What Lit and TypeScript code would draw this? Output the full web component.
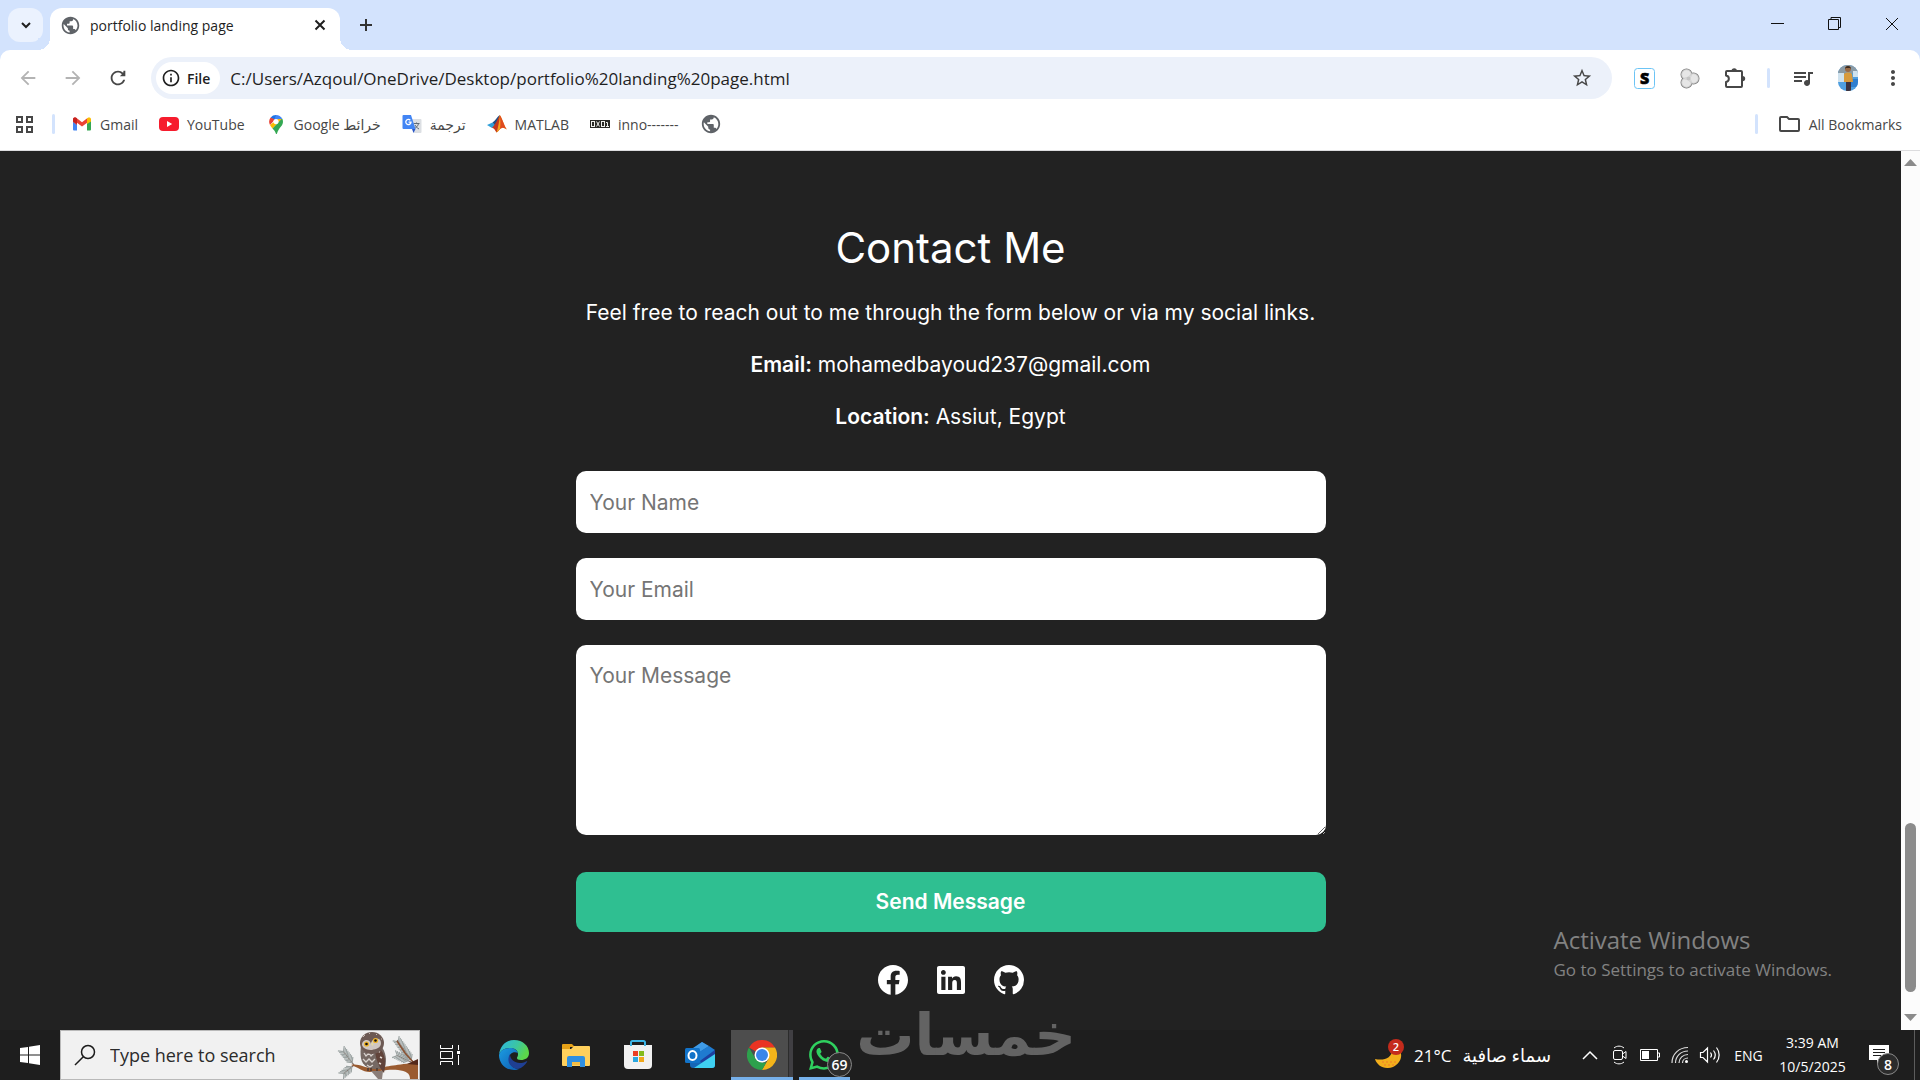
import { LitElement, html, css, svg, nothing } from "lit";
import { customElement, property } from "lit/decorators.js";

const PATHS: Record<string, string> = {
  globe:
    "M12 2C6.48 2 2 6.48 2 12s4.48 10 10 10 10-4.48 10-10S17.52 2 12 2zm-1 17.93c-3.95-.49-7-3.85-7-7.93 0-.62.08-1.21.21-1.79L9 15v1c0 1.1.9 2 2 2v1.93zm6.9-2.54c-.26-.81-1-1.39-1.9-1.39h-1v-3c0-.55-.45-1-1-1H8v-2h2c.55 0 1-.45 1-1V7h2c1.1 0 2-.9 2-2v-.41c2.93 1.19 5 4.06 5 7.41 0 2.08-.8 3.97-2.1 5.39z",
  back: "M20 11H7.83l5.59-5.59L12 4l-8 8 8 8 1.41-1.41L7.83 13H20v-2z",
  forward: "M12 4l-1.41 1.41L16.17 11H4v2h12.17l-5.58 5.59L12 20l8-8z",
  reload:
    "M17.65 6.35C16.2 4.9 14.21 4 12 4c-4.42 0-7.99 3.58-7.99 8s3.57 8 7.99 8c3.73 0 6.84-2.55 7.73-6h-2.08c-.82 2.33-3.04 4-5.65 4-3.31 0-6-2.69-6-6s2.69-6 6-6c1.66 0 3.14.69 4.22 1.78L14 10h6V4h-2z",
  star: "M22 9.24l-7.19-.62L12 2 9.19 8.63 2 9.24l5.46 4.73L5.82 21 12 17.27 18.18 21l-1.63-7.03L22 9.24zM12 15.4l-3.76 2.27 1-4.28-3.32-2.88 4.38-.38L12 6.1l1.71 4.04 4.38.38-3.32 2.88 1 4.28L12 15.4z",
  media:
    "M15 6H3v2h12V6zm0 4H3v2h12v-2zM3 16h8v-2H3v2zM17 6v8.18c-.31-.11-.65-.18-1-.18-1.66 0-3 1.34-3 3s1.34 3 3 3 3-1.34 3-3V8h3V6h-5z",
  more: "M12 8c1.1 0 2-.9 2-2s-.9-2-2-2-2 .9-2 2 .9 2 2 2zm0 2c-1.1 0-2 .9-2 2s.9 2 2 2 2-.9 2-2-.9-2-2-2zm0 6c-1.1 0-2 .9-2 2s.9 2 2 2 2-.9 2-2-.9-2-2-2z",
  info: "M11 7h2v2h-2zm0 4h2v6h-2zm1-9C6.48 2 2 6.48 2 12s4.48 10 10 10 10-4.48 10-10S17.52 2 12 2zm0 18c-4.41 0-8-3.59-8-8s3.59-8 8-8 8 3.59 8 8-3.59 8-8 8z",
};

const glyph = (name: string, size: number) =>
  html`<svg width=${size} height=${size} viewBox="0 0 24 24" fill="currentColor" aria-hidden="true"><path d=${PATHS[name]}></path></svg>`;

const draw = (w: number, h: number, body: unknown) =>
  html`<svg width=${w} height=${h} viewBox="0 0 ${w} ${h}" fill="none" aria-hidden="true">${body}</svg>`;

const gmail = draw(20, 20, svg`
  <path d="M1 5v10.500a1 1 0 0 0 1 1h3V8z" fill="#4285f4"/>
  <path d="M15 8v8.500h3a1 1 0 0 0 1-1V5z" fill="#34a853"/>
  <path d="M1 5.500C1 3.500 3 3 4.500 4L10 8.300 15.500 4v4.400L10 12.500 5 8.700V11L1 8z" fill="#ea4335"/>
  <path d="M1 5.500C1 3.500 3 3 4.500 4L5 4.400V10L1 7.500z" fill="#c5221f"/>
  <path d="M19 5.500C19 3.500 17 3 15.500 4L15 4.400V10l4-2.500z" fill="#fbbc04"/>`);

const youtube = draw(20, 20, svg`
  <rect x="0" y="3" width="20" height="14" rx="4" fill="#f61c2d"/>
  <path d="M8 7l5.200 3L8 13z" fill="#fff"/>`);

const maps = draw(20, 20, svg`
  <path d="M10 1a7 7 0 0 0-5.300 2.400L10 8z" fill="#1a73e8"/>
  <path d="M4.700 3.400A7 7 0 0 0 4 11l5-5.600z" fill="#ea4335"/>
  <path d="M10 1a7 7 0 0 1 6.200 4L11 10.500 8 7z" fill="#4285f4"/>
  <path d="M4 11c.6 1.200 1.500 2.300 2.500 3.500L16.200 5 12 5z" fill="#fbbc04"/>
  <path d="M16.200 4.600c1.500 3 .7 5.400-1.200 7.900-1.700 2.200-3.200 4-4 7-.3.800-.9.800-1.200 0-.6-2-1.700-3.500-3.300-5z" fill="#34a853"/>
  <circle cx="10" cy="7.600" r="2.600" fill="#fff"/>`);

const translate = draw(20, 20, svg`
  <path d="M8 5h10.500a1 1 0 0 1 1 1v12a1 1 0 0 1-1 1H12z" fill="#dcdfe3"/>
  <path d="M11.500 9.500h6M14.500 8.500v1M16.500 9.500c-.5 2.500-2 4-4 5M13 11c.8 1.500 2 2.800 4 4" stroke="#5f6b78" stroke-width="1"/>
  <path d="M1.500 1H9l4.500 14H1.500a1 1 0 0 1-1-1V2a1 1 0 0 1 1-1z" fill="#4285f4"/>
  <path d="M10 15h3.500L11.500 19z" fill="#2a56c6"/>
  <path d="M8.300 6.200A2.600 2.600 0 1 0 9 8.200H6.600" stroke="#fff" stroke-width="1.300"/>`);

const matlab = draw(20, 20, svg`
  <path d="M0 11l5.500-2.500L8 11.500 5 14z" fill="#2f9fd8"/>
  <path d="M5.500 8.500C8 7 10 3 12.800 1L9 13l-4 1 3-2.500z" fill="#1b4f86"/>
  <path d="M12.800 1C10.500 5 9 10 5 14c2-.6 3 2.500 4.500 4.500 2-1 3.500-4 5-4.500z" fill="#c3361d"/>
  <path d="M12.800 1c2 2.500 4 10 7 14.500-2.500-1.800-4-2-5.300-1.500C12 15 11 18 9.500 18.500 11 14 12.500 7 12.800 1z" fill="#f2a31b"/>
  <path d="M12.800 1c.5 4 1 9 .2 13.500l2-.6c2-.4 3 .5 4.800 1.600C16.800 11 15 3.500 12.800 1z" fill="#df4a1e"/>`);

const inno = draw(20, 20, svg`
  <rect x="0" y="6" width="20" height="8" fill="#2a2a26"/>
  <g stroke="#f2f2ee" stroke-width="1">
    <rect x="1.500" y="7.500" width="3" height="5"/><path d="M6.500 7.500l3 5M9.500 7.500l-3 5"/>
    <rect x="11.500" y="7.500" width="3" height="5"/><path d="M16 8.500h1.500v4.500M16 12.500h3"/>
  </g>`);

interface Bookmark {
  label: string;
  icon: unknown;
  dir?: string;
}

const BOOKMARKS: Bookmark[] = [
  { label: "Gmail", icon: gmail },
  { label: "YouTube", icon: youtube },
  { label: "Google خرائط", icon: maps },
  { label: "ترجمة", icon: translate, dir: "rtl" },
  { label: "MATLAB", icon: matlab },
  { label: "inno-------", icon: inno },
  { label: "", icon: glyph("globe", 22) },
];

const reset = css`
  *, *::before, *::after { box-sizing: border-box; }
  button, input, textarea { font: inherit; color: inherit; border: 0; margin: 0; }
  button { background: none; padding: 0; display: grid; place-items: center; }
  a { color: inherit; text-decoration: none; }
  svg { display: block; flex: none; }
`;

@customElement("browser-bar")
export class BrowserBar extends LitElement {
  @property() title = "";
  @property() address = "";

  static styles = [
    reset,
    css`
      :host { display: block; background: #fff; color: #1f1f1f; font-family: "Open Sans", "Noto Sans", "DejaVu Sans", sans-serif; border-bottom: 1px solid #dcdcde; }
      .strip { display: flex; align-items: flex-start; height: 50px; background: #d3e3fd; padding-left: 8px; }
      .tabs-menu { width: 35px; height: 34px; margin-top: 8px; border-radius: 12px; background: #ebf2fe; }
      .tab { position: relative; display: flex; align-items: center; width: 290px; height: 42px; margin: 8px 0 0 7px; padding: 0 10px 8px; gap: 9px; background: #fff; border-radius: 12px 12px 0 0; font-size: 14px; }
      .tab::before, .tab::after { content: ""; position: absolute; bottom: 0; width: 12px; height: 12px; }
      .tab::before { right: 100%; background: radial-gradient(circle at 0 0, #d3e3fd 12px, #fff 12px); }
      .tab::after { left: 100%; background: radial-gradient(circle at 100% 0, #d3e3fd 12px, #fff 12px); }
      .tab-icon { color: #5f6368; }
      .tab-title { flex: 1; }
      .new-tab { width: 52px; height: 50px; color: #333; }
      .controls { display: flex; margin-left: auto; }
      .control { width: 57px; height: 48px; color: #111; }
      .toolbar { display: flex; align-items: center; height: 56px; padding: 0 5px; background: #fff; color: #474747; }
      .corners { background: #d3e3fd; }
      .corners .toolbar { border-radius: 10px 10px 0 0; }
      .tool { width: 45px; height: 42px; }
      .off { color: #b3b3b3; }
      .address { display: flex; flex: 1; align-items: center; height: 42px; margin: 0 10px 0 11px; padding: 0 19px 0 5px; border-radius: 21px; background: #ecf1fa; color: #1f1f1f; }
      .chip { display: flex; align-items: center; gap: 6px; height: 32px; padding: 0 10px 0 5px; border-radius: 16px; background: #fff; font-size: 14px; font-weight: 600; }
      .url { flex: 1; min-width: 0; margin-left: 10px; padding: 0; background: none; font-size: 17px; outline: 0; }
      .favourite { color: #474747; }
      .rule { width: 3px; height: 20px; border-radius: 2px; background: #d3e3fd; }
      .toolbar .rule { margin: 0 10px; }
      .bookmarks { display: flex; align-items: center; height: 44px; padding: 0 18px 8px 14px; gap: 21px; font-size: 14px; color: #474747; }
      .bookmark { display: flex; align-items: center; gap: 8px; }
      .apps { margin-right: -3px; }
      .apps + .rule { margin-right: -4px; }
      .spacer { flex: 1; }
      .globe { color: #5f6368; }
    `,
  ];

  render() {
    return html`
      <header class="strip">
        <button class="tabs-menu" aria-label="Search tabs">
          ${draw(12, 12, svg`<path d="M2 4l4 4 4-4" stroke="#1f1f1f" stroke-width="2"/>`)}
        </button>
        <div class="tab">
          <span class="tab-icon">${glyph("globe", 21)}</span>
          <span class="tab-title">${this.title}</span>
          <button aria-label="Close tab">
            ${draw(20, 20, svg`<path d="M5.500 5.500l9 9M14.500 5.500l-9 9" stroke="#1f1f1f" stroke-width="2"/>`)}
          </button>
        </div>
        <button class="new-tab" aria-label="New tab">
          ${draw(14, 14, svg`<path d="M7 1v12M1 7h12" stroke="currentColor" stroke-width="2"/>`)}
        </button>
        <div class="controls">
          <button class="control" aria-label="Minimize">${draw(14, 14, svg`<path d="M0 6.500h13" stroke="currentColor"/>`)}</button>
          <button class="control" aria-label="Restore">
            ${draw(14, 14, svg`<path d="M.5 2.500h10v10H.5zM3 2.500V.5h9.500V10.500H11" stroke="currentColor"/>`)}
          </button>
          <button class="control" aria-label="Close">${draw(14, 14, svg`<path d="M1 1l12 12M13 1L1 13" stroke="currentColor"/>`)}</button>
        </div>
      </header>
      <div class="corners">
        <div class="toolbar">
          <button class="tool off" aria-label="Back">${glyph("back", 22)}</button>
          <button class="tool off" aria-label="Forward">${glyph("forward", 22)}</button>
          <button class="tool" aria-label="Reload">${glyph("reload", 22)}</button>
          <div class="address">
            <button class="chip">${glyph("info", 20)}<span>File</span></button>
            <input class="url" aria-label="Address" .value=${this.address} />
            <button class="favourite" aria-label="Bookmark this page">${glyph("star", 22)}</button>
          </div>
          <button class="tool" aria-label="S extension">
            ${draw(21, 21, svg`
              <rect x=".5" y=".5" width="20" height="20" rx="3" fill="#fff" stroke="#6cc4f5"/>
              <text x="10.500" y="16" text-anchor="middle" font-size="16" font-weight="800" fill="#000" stroke="#000" stroke-width=".6">S</text>`)}
          </button>
          <button class="tool" aria-label="Colour extension">
            ${draw(21, 21, svg`
              <g stroke="#7d7d7d" stroke-width="2"><circle cx="7.500" cy="6.500" r="5"/><circle cx="7.500" cy="14.500" r="5"/><circle cx="14.500" cy="10.500" r="5"/></g>
              <g fill="#e6e6e6"><circle cx="7.500" cy="6.500" r="5"/><circle cx="7.500" cy="14.500" r="5"/><circle cx="14.500" cy="10.500" r="5"/></g>
              <g stroke="#c6c6c6" stroke-width=".7"><circle cx="7.500" cy="6.500" r="4.800"/><circle cx="7.500" cy="14.500" r="4.800"/><circle cx="14.500" cy="10.500" r="4.800"/></g>
              <circle cx="9.500" cy="10.500" r="2" fill="#c4c4c4"/>`)}
          </button>
          <button class="tool" aria-label="Extensions">
            ${draw(22, 22, svg`
              <path d="M3 4h14a1 1 0 0 1 1 1v14a1 1 0 0 1-1 1H3a1 1 0 0 1-1-1v-4c3.800-.6 3.800-5.800 0-6.400V5a1 1 0 0 1 1-1z" stroke="currentColor" stroke-width="2" stroke-linejoin="round"/>
              <path d="M7.500 4a2.700 2.700 0 0 1 5.400 0zM18.600 9a2.600 2.600 0 0 1 0 5.200z" fill="currentColor"/>`)}
          </button>
          <span class="rule"></span>
          <button class="tool" aria-label="Media">${glyph("media", 24)}</button>
          <button class="tool" aria-label="Profile">
            ${draw(20, 26, svg`
              <clipPath id="face"><rect width="20" height="26" rx="9"/></clipPath>
              <g clip-path="url(#face)">
                <rect width="20" height="26" fill="#4f9fe0"/>
                <path d="M0 0h20v8H0z" fill="#8a9aa5"/><path d="M0 8h6v9H0zM15 6h5v6h-5z" fill="#cfe2ee"/>
                <path d="M13 14h7v8h-7z" fill="#2f7fd0"/>
                <path d="M6 9c1-2 7-2 8 0l1 8H6z" fill="#d79a3c"/><circle cx="10" cy="4" r="3" fill="#9a6a43"/>
                <path d="M7 4c0-4 6-4 6 0l-1-1H8z" fill="#3a2a20"/><path d="M8 17h5v9H8z" fill="#3c3440"/>
              </g>`)}
          </button>
          <button class="tool" aria-label="Menu">${glyph("more", 24)}</button>
        </div>
      </div>
      <nav class="bookmarks">
        <button class="apps" aria-label="Apps">
          ${draw(20, 20, svg`<path d="M3 3h5v5H3zM13 3h5v5h-5zM3 13h5v5H3zM13 13h5v5h-5z" stroke="currentColor" stroke-width="2"/>`)}
        </button>
        <span class="rule"></span>
        ${BOOKMARKS.map(
          (b) => html`<a class="bookmark" href="#">
            <span class="globe">${b.icon}</span>
            ${b.label ? html`<span dir=${b.dir ?? "ltr"}>${b.label}</span>` : nothing}
          </a>`
        )}
        <span class="spacer"></span>
        <span class="rule"></span>
        <a class="bookmark" href="#">
          ${draw(22, 18, svg`<path d="M1 3a1 1 0 0 1 1-1h6l2 2h9a1 1 0 0 1 1 1v10a1 1 0 0 1-1 1H2a1 1 0 0 1-1-1z" stroke="currentColor" stroke-width="2"/>`)}
          <span>All Bookmarks</span>
        </a>
      </nav>
    `;
  }
}

const SOCIAL = [
  {
    label: "Facebook",
    box: "8 8 496 496",
    width: 30,
    path: "M504 256C504 119 393 8 256 8S8 119 8 256c0 123.780 90.690 226.380 209.250 245V327.690h-63V256h63v-54.640c0-62.150 37-96.480 93.670-96.480 27.140 0 55.520 4.840 55.520 4.840v61h-31.280c-30.800 0-40.410 19.120-40.410 38.730V256h68.780l-11 71.690h-57.780V501C413.310 482.380 504 379.780 504 256z",
  },
  {
    label: "LinkedIn",
    box: "0 32 448 448",
    width: 28,
    path: "M416 32H31.900C14.300 32 0 46.500 0 64.300v383.400C0 465.500 14.300 480 31.900 480H416c17.600 0 32-14.500 32-32.300V64.300c0-17.800-14.400-32.300-32-32.300zM135.400 416H69V202.200h66.500V416zm-33.200-243c-21.300 0-38.500-17.300-38.500-38.500S80.900 96 102.200 96c21.200 0 38.500 17.300 38.500 38.500 0 21.300-17.200 38.500-38.500 38.500zm282.100 243h-66.400V312c0-24.800-.5-56.700-34.500-56.700-34.600 0-39.900 27-39.900 54.900V416h-66.400V202.200h63.700v29.200h.9c8.900-16.800 30.600-34.500 62.900-34.500 67.200 0 79.700 44.300 79.700 101.900V416z",
  },
  {
    label: "GitHub",
    box: "0 0 16 16",
    width: 30,
    path: "M8 0C3.580 0 0 3.580 0 8c0 3.540 2.290 6.530 5.470 7.590.4.070.55-.17.55-.38 0-.19-.01-.82-.01-1.490-2.010.370-2.530-.49-2.690-.94-.09-.23-.48-.94-.82-1.130-.28-.15-.68-.52-.01-.53.630-.01 1.080.580 1.230.820.720 1.210 1.870.870 2.330.660.070-.52.280-.87.510-1.070-1.780-.2-3.640-.89-3.640-3.950 0-.87.310-1.590.820-2.150-.08-.2-.36-1.020.080-2.120 0 0 .67-.21 2.200.820.640-.18 1.320-.27 2-.27s1.360.09 2 .27c1.530-1.040 2.200-.82 2.200-.82.440 1.100.160 1.920.080 2.120.510.560.820 1.270.820 2.150 0 3.070-1.870 3.750-3.650 3.950.290.250.540.730.540 1.480 0 1.070-.01 1.930-.01 2.200 0 .210.150.460.550.380A8.010 8.010 0 0 0 16 8c0-4.420-3.580-8-8-8z",
  },
];

@customElement("contact-page")
export class ContactPage extends LitElement {
  static styles = [
    reset,
    css`
      :host { display: flex; background: #222; color: #fff; font-family: Inter, "Open Sans", sans-serif; font-size: 21px; line-height: 32px; }
      .contact { flex: 1; display: flex; flex-direction: column; align-items: center; padding: 67px 20px 32px; }
      .heading { margin: 0 0 19px; font-size: 42px; line-height: 60px; font-weight: 400; }
      .lines { display: grid; gap: 20px; text-align: center; }
      .lines p { margin: 0; }
      .lines strong { font-weight: 600; }
      .form { display: grid; gap: 25px; width: 100%; max-width: 750px; margin-top: 38px; }
      .field { display: block; width: 100%; height: 62px; padding: 15px 14px; border-radius: 10px; background: #fff; color: #222; outline: 0; }
      .field::placeholder { color: #757575; }
      .message { height: 190px; resize: vertical; }
      .send { height: 60px; margin-top: 12px; border-radius: 10px; background: #2fbf91; color: #fff; font-weight: 600; }
      .social { display: flex; align-items: center; gap: 29px; margin-top: 33px; }
      .track { display: flex; flex-direction: column; align-items: center; width: 19px; padding: 8px 0; background: #fcfcfc; }
      .thumb { width: 11px; height: 169px; margin: auto 0 22px; border-radius: 6px; background: #8b8b8b; }
    `,
  ];

  render() {
    return html`
      <main class="contact">
        <h1 class="heading">Contact Me</h1>
        <div class="lines">
          <p>Feel free to reach out to me through the form below or via my social links.</p>
          <p><strong>Email:</strong> mohamedbayoud237@gmail.com</p>
          <p><strong>Location:</strong> Assiut, Egypt</p>
        </div>
        <form class="form" @submit=${(e: Event) => e.preventDefault()}>
          <input class="field" type="text" placeholder="Your Name" aria-label="Your Name" />
          <input class="field" type="email" placeholder="Your Email" aria-label="Your Email" />
          <textarea class="field message" placeholder="Your Message" aria-label="Your Message"></textarea>
          <button class="send" type="submit">Send Message</button>
        </form>
        <div class="social">
          ${SOCIAL.map(
            (s) => html`<a href="#" aria-label=${s.label}>
              <svg width=${s.width} height=${s.width} viewBox=${s.box} fill="#fff"><path d=${s.path}></path></svg>
            </a>`
          )}
        </div>
      </main>
      <div class="track">
        ${draw(13, 8, svg`<path d="M0 7l6.500-7L13 7z" fill="#8b8b8b"/>`)}
        <span class="thumb"></span>
        ${draw(13, 8, svg`<path d="M0 0l6.500 7L13 0z" fill="#8b8b8b"/>`)}
      </div>
    `;
  }
}

const sprig = (x: number, y: number, angle: number, length: number) => svg`
  <g transform="translate(${x} ${y}) rotate(${angle})" stroke="#9ba3a2" stroke-width="1.200">
    <path d="M0 0h${length}" stroke="#7d6a60"/>
    ${Array.from({ length: Math.floor(length / 2) - 1 }, (_, i) => svg`<path d="M${i * 2 + 3} 0l4-4M${i * 2 + 3} 0l4 4"/>`)}
  </g>`;

const owl = draw(82, 48, svg`
  ${sprig(17, 34, -128, 18)}
  ${sprig(17, 34, 140, 14)}
  ${sprig(76, 31, -126, 27)}
  ${sprig(74, 31, -155, 16)}
  <path d="M60 10l8 12 8 9" stroke="#8a5233" stroke-width="1.500"/>
  <path d="M14 34c8-2 14 4 24 3 14-1 20-4 43-5v16h-8c0-6-4-8-12-9-12-1-18 2-28 2-8 0-12-5-19-7z" fill="#9a5b30"/>
  <path d="M70 33l11-5v6z" fill="#54291a"/>
  <path d="M34 40h12l-1 8h-4z" fill="#8a7d78"/>
  <path d="M24 14c-1 10-1 18 6 22 6 3 14 3 18 0 2-7 1-15-4-21z" fill="#756863"/>
  <path d="M38 14c9 5 12 14 9 28-5-5-10-17-9-28z" fill="#61433a"/>
  <path d="M27 22l2 3 3-3 2 3 3-3M26 28l3 3 3-3 3 3 3-3M30 34l3 2 3-2" stroke="#d9d2ce" stroke-width="1.300"/>
  <path d="M41 20l2 1M43 26l2 1M42 32l2 1" stroke="#e8e0da" stroke-width="1.500"/>
  <ellipse cx="35" cy="12" rx="12" ry="11" fill="#6d5a54"/>
  <path d="M26 6l2-2M32 3l1-1M39 4l1-1M44 8l1 0" stroke="#c9bcb4"/>
  <path d="M25 14c0-6 8-7 9-1 1-7 10-7 10-1 0 5-5 6-9 7-4 0-9-1-10-5z" fill="#cfc7c2"/>
  <circle cx="29.500" cy="13" r="2.600" fill="#f0b429"/><circle cx="29.500" cy="13" r="1.300" fill="#111"/>
  <circle cx="38.500" cy="9.500" r="2.600" fill="#f0b429"/><circle cx="38.500" cy="9.500" r="1.300" fill="#111"/>
  <path d="M34 12l2-1 .5 3-1.500 1z" fill="#e6d9a0"/>
  <path d="M31 37v3M34 37v3M40 37v3" stroke="#4a3a33" stroke-width="1.500"/>`);

const edge = draw(30, 30, svg`
  <defs>
    <linearGradient id="e1" x1="0" y1="0" x2="1" y2="1"><stop offset="0" stop-color="#1b9de2"/><stop offset="1" stop-color="#0f5bb0"/></linearGradient>
    <linearGradient id="e2" x1="0" y1="0" x2="1" y2=".4"><stop offset="0" stop-color="#2ab5e6"/><stop offset=".6" stop-color="#3cc6a2"/><stop offset="1" stop-color="#5bd64a"/></linearGradient>
  </defs>
  <path d="M0 15C1 5 8 0 15 0c9 0 15 6 15 13 0 5-4 7-8 7-3 0-4-1-4-2 0-1 1-1 1-4 0-4-4-6-8-6C5 8 1 11 0 15z" fill="url(#e2)"/>
  <path d="M0 15c1-4 5-7 11-7 4 0 7 2 8 5-5-2-9 1-9 6 0 6 5 10 10 10-2 1-4 1-5 1C6 30 0 23 0 15z" fill="url(#e1)"/>
  <path d="M11 14c-4 7 0 14 8 15 4-1 7-4 9-7 .5-1 0-1-1-.6C20 25 11 22 11 14z" fill="#1f3f93"/>`);

const explorer = draw(28, 24, svg`
  <path d="M0 2a1 1 0 0 1 1-1h9l3 3h-5v4H0z" fill="#e6a117"/>
  <path d="M0 6h9l3-3h15a1 1 0 0 1 1 1v18a1 1 0 0 1-1 1H1a1 1 0 0 1-1-1z" fill="#ffd05c"/>
  <path d="M5 24V15a2 2 0 0 1 2-2h14a2 2 0 0 1 2 2v9h-5v-5h-8v5z" fill="#2f8fe0"/>
  <path d="M10 19h8v3h-8z" fill="#f3bd45"/>`);

const store = draw(30, 30, svg`
  <path d="M8 7V2.500A1.500 1.500 0 0 1 9.500 1h11A1.500 1.500 0 0 1 22 2.500V7" stroke="#3cb5e6" stroke-width="2"/>
  <path d="M1 5h28v20a4 4 0 0 1-4 4H5a4 4 0 0 1-4-4z" fill="#f1f1f1"/>
  <path d="M8 6V3M22 6V3" stroke="#3cb5e6" stroke-width="2"/>
  <path d="M10 11h5v5h-5z" fill="#ea3e23"/><path d="M16 11h5v5h-5z" fill="#84bb1b"/>
  <path d="M10 17h5v5h-5z" fill="#2aa6df"/><path d="M16 17h5v5h-5z" fill="#f0a81c"/>`);

const outlook = draw(30, 28, svg`
  <path d="M5 10L17 1l13 9v14a3 3 0 0 1-3 3H8a3 3 0 0 1-3-3z" fill="#1566b7"/>
  <path d="M5 9L17 1l7 4-14 9z" fill="#3f9be6"/><path d="M10 14l14-9 6 4-15 11z" fill="#1f7bd0"/>
  <path d="M15 20l15-11v5L17 22z" fill="#1d3fa0"/>
  <path d="M30 13v11a3 3 0 0 1-3 3H9z" fill="#3fd0f2"/>
  <rect x="0" y="7" width="15" height="15" rx="1.500" fill="#1273c9"/>
  <ellipse cx="7.500" cy="14.500" rx="4" ry="4.500" stroke="#fff" stroke-width="2"/>`);

const chrome = draw(30, 30, svg`
  <path d="M15 15L2 7.500A15 15 0 0 1 28 7.500H15z" fill="#ea3323"/>
  <path d="M15 7.500h13A15 15 0 0 1 15 30l6.500-11.250z" fill="#f4b41a"/>
  <path d="M2 7.500l6.500 11.250L15 22.500h4.300L15 30A15 15 0 0 1 2 7.500z" fill="#2da14c"/>
  <circle cx="15" cy="15" r="7.500" fill="#fff"/><circle cx="15" cy="15" r="6" fill="#3a86ea"/>`);

const whatsapp = html`<svg width="30" height="30" viewBox="0 0 16 16" fill="#2fd05f" aria-hidden="true"><path d="M13.601 2.326A7.850 7.850 0 0 0 7.994 0C3.627 0 .068 3.558.064 7.926c0 1.399.366 2.760 1.057 3.965L0 16l4.204-1.102a7.900 7.900 0 0 0 3.790.965h.004c4.368 0 7.926-3.558 7.930-7.930A7.900 7.900 0 0 0 13.600 2.326zM7.994 14.521a6.600 6.600 0 0 1-3.356-.92l-.24-.144-2.494.654.666-2.433-.156-.251a6.560 6.560 0 0 1-1.007-3.505c0-3.626 2.957-6.584 6.591-6.584a6.560 6.560 0 0 1 4.660 1.931 6.560 6.560 0 0 1 1.928 4.660c-.004 3.639-2.961 6.592-6.592 6.592m3.615-4.934c-.197-.099-1.170-.578-1.353-.646-.182-.065-.315-.099-.445.099-.133.197-.513.646-.627.775-.114.133-.232.148-.43.050-.197-.1-.836-.308-1.592-.985-.59-.525-.985-1.175-1.103-1.372-.114-.198-.011-.304.088-.403.087-.088.197-.232.296-.346.1-.114.133-.198.198-.33.065-.134.034-.248-.015-.347-.05-.099-.445-1.076-.612-1.470-.16-.389-.323-.335-.445-.34-.114-.007-.247-.007-.38-.007a.730.730 0 0 0-.529.247c-.182.198-.691.677-.691 1.654s.71 1.916.81 2.049c.098.133 1.394 2.132 3.383 2.992.47.205.84.326 1.129.418.475.152.904.129 1.246.080.38-.058 1.171-.48 1.338-.943.164-.464.164-.86.114-.943-.049-.084-.182-.133-.38-.232"></path></svg>`;

const APPS = [
  { label: "Microsoft Edge", icon: edge },
  { label: "File Explorer", icon: explorer },
  { label: "Microsoft Store", icon: store },
  { label: "Outlook", icon: outlook },
  { label: "Google Chrome", icon: chrome, state: "active" },
  { label: "WhatsApp", icon: whatsapp, state: "running", badge: "69" },
];

@customElement("task-bar")
export class TaskBar extends LitElement {
  static styles = [
    reset,
    css`
      :host { display: flex; align-items: stretch; height: 50px; background: #1e1e1e; color: #fff; font-family: "Open Sans", "Noto Sans", "DejaVu Sans", sans-serif; font-size: 15px; }
      .start { width: 60px; }
      .search { display: flex; align-items: center; width: 360px; border: 1px solid #b9b9b9; background: #f1f1f1; color: #222; padding-left: 13px; }
      .query { flex: 1; min-width: 0; margin-left: 14px; padding: 0; background: none; font-size: 18px; outline: 0; }
      .query::placeholder { color: #2b2b2b; }
      .task-view { width: 63px; padding-right: 3px; }
      .app { position: relative; width: 62px; }
      .active { background: linear-gradient(90deg, #4d4d4d 57px, #2c2c2c 57px, #2c2c2c 58px, #403f43 58px); border-bottom: 3px solid #76b0ea; padding-top: 3px; }
      .running::after { content: ""; position: absolute; left: 6px; right: 5px; bottom: 0; height: 3px; background: #76b0ea; }
      .badge { position: absolute; display: grid; place-items: center; border-radius: 50%; }
      .count { left: 34px; top: 22px; width: 25px; height: 25px; border: 1px solid #8a8a8a; background: #2c2c2c; font-size: 14px; font-weight: 600; }
      .tray { display: flex; align-items: center; margin-left: auto; }
      .weather { display: flex; align-items: center; gap: 11px; margin-right: 24px; font-size: 17px; }
      .forecast { font-size: 18px; }
      .moon { position: relative; }
      .alert { right: -1px; top: -3px; width: 16px; height: 16px; background: #c42b1c; font-size: 11px; font-weight: 600; line-height: 16px; }
      .icon { width: 30px; height: 50px; }
      .language { width: 47px; font-size: 14px; }
      .clock { width: 81px; font-size: 14px; line-height: 24px; text-align: center; }
      .notices { position: relative; width: 61px; height: 50px; padding-right: 9px; }
      .notices .count { left: 24px; top: 23px; width: 22px; height: 22px; }
      .edge { align-self: stretch; width: 6px; border-left: 1px solid #5c5c5c; }
    `,
  ];

  render() {
    return html`
      <button class="start" aria-label="Start">
        ${draw(20, 20, svg`<path d="M0 3l8-1v7.500H0zM9 1.800L20 0v9.500H9zM0 10.500h8V18l-8-1zM9 10.500h11V20L9 18.300z" fill="#fff"/>`)}
      </button>
      <div class="search">
        ${draw(22, 22, svg`<circle cx="14" cy="8" r="6.500" stroke="#1b1b1b" stroke-width="1.500"/><path d="M9.300 12.700L1 21" stroke="#1b1b1b" stroke-width="1.500"/>`)}
        <input class="query" type="search" placeholder="Type here to search" aria-label="Type here to search" />
        ${owl}
      </div>
      <button class="task-view" aria-label="Task view">
        ${draw(22, 20, svg`<path d="M1.500 0v3.500h12V0M1.500 20v-3.500h12V20M1.500 6.500h12v7h-12zM19.500 0v5M19.500 10v10" stroke="#fff"/><path d="M18 6h3v3h-3z" fill="#fff"/>`)}
      </button>
      ${APPS.map(
        (a) => html`<button class="app ${a.state ?? ""}" aria-label=${a.label}>
          ${a.icon}${a.badge ? html`<span class="badge count">${a.badge}</span>` : nothing}
        </button>`
      )}
      <div class="tray">
        <button class="weather">
          <span class="moon">
            ${draw(28, 26, svg`<path d="M23 5c6 8 3 16-5 20C10 28 2 24 0 17c9 2 17-1 17-9z" fill="#f2ae1c"/><path d="M7 20h14M9 23h10" stroke="#f07b2a" stroke-dasharray="2 2"/>`)}
            <span class="badge alert">2</span>
          </span>
          <span>21°C</span>
          <span class="forecast" dir="rtl">سماء صافية</span>
        </button>
        <button class="icon" aria-label="Hidden icons">${draw(16, 10, svg`<path d="M1 9l7-7 7 7" stroke="#fff" stroke-width="1.500"/>`)}</button>
        <button class="icon" aria-label="Camera">
          ${draw(16, 20, svg`<rect x="1.500" y="5.500" width="9" height="9" rx="1.500" stroke="#fff"/><path d="M10.500 9l3.500-2.500v7L10.500 11M2 3c3-2.500 7-2.500 10 0M2 17c3 2.500 7 2.500 10 0" stroke="#fff"/>`)}
        </button>
        <button class="icon" aria-label="Battery">
          ${draw(20, 12, svg`<path d="M.5 .5h17v11H.5zM18 4h1.500v4H18" stroke="#fff"/><path d="M2 2h7v8H2z" fill="#fff"/>`)}
        </button>
        <button class="icon" aria-label="Network">
          ${draw(18, 18, svg`<path d="M1 17C1 8 8 1.500 17 1.500M4.500 17C4.500 10 10 5 17 5M8 17c0-5 4-8.500 9-8.500M11.500 17c0-3 2.500-5 5.500-5" stroke="#ddd" stroke-width="1.200"/><circle cx="15.500" cy="15.500" r="1.500" fill="#fff"/>`)}
        </button>
        <button class="icon" aria-label="Volume">
          ${draw(22, 18, svg`<path d="M1.500 6.500H4L8.500 2v14L4 11.500H1.500zM11.500 6.500c1.200 1.500 1.200 3.500 0 5M14.500 4.500c2.200 2.800 2.200 6.200 0 9M17.500 1.500c3.500 4.500 3.500 10.500 0 15" stroke="#fff" stroke-width="1.200"/>`)}
        </button>
        <button class="language">ENG</button>
        <div class="clock"><div>3:39 AM</div><div>10/5/2025</div></div>
        <button class="notices" aria-label="Notifications">
          ${draw(20, 20, svg`<path d="M0 0h20v15h-8l-4 4v-4H0z" fill="#fff"/><path d="M4 4.500h12M4 7.500h12M4 10.500h8" stroke="#1e1e1e"/>`)}
          <span class="badge count">8</span>
        </button>
        <span class="edge"></span>
      </div>
    `;
  }
}

@customElement("app-root")
export class AppRoot extends LitElement {
  static styles = css`
    :host { display: grid; grid-template-rows: auto 1fr auto; position: relative; min-height: 100vh; font-family: "Open Sans", "Noto Sans", sans-serif; }
    .activate { position: absolute; right: 88px; bottom: 97px; color: #828282; font-size: 17px; line-height: 26px; pointer-events: none; }
    .activate strong { display: block; font-weight: 400; font-size: 24px; line-height: 34px; }
    .stamp { position: absolute; left: 50%; bottom: 10px; margin-left: -104px; width: 220px; color: #636363; font-family: "DejaVu Sans", sans-serif; font-size: 58px; font-weight: 700; line-height: 70px; pointer-events: none; }
  `;

  render() {
    return html`
      <browser-bar title="portfolio landing page" address="C:/Users/Azqoul/OneDrive/Desktop/portfolio%20landing%20page.html"></browser-bar>
      <contact-page></contact-page>
      <task-bar></task-bar>
      <div class="activate"><strong>Activate Windows</strong>Go to Settings to activate Windows.</div>
      <div class="stamp" dir="rtl">خمسات</div>
    `;
  }
}
